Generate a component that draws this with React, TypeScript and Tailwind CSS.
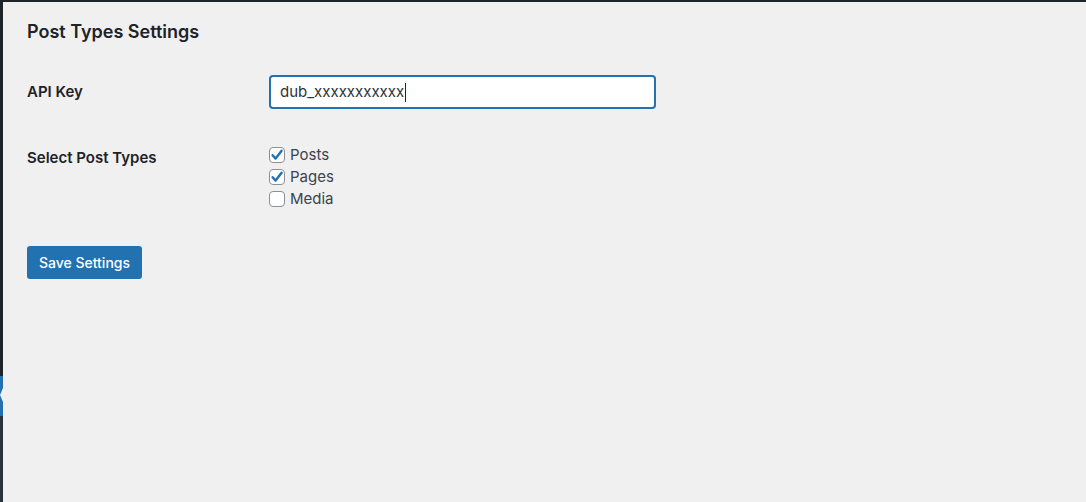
import React from 'react';

const font = { fontFamily: 'Inter, "Noto Sans", sans-serif' };

interface BoxProps {
  label: string;
  checked: boolean;
}

const CheckRow: React.FC<BoxProps> = ({ label, checked }) => (
  <label className="flex items-center h-[22px] gap-[5px]">
    <span className="w-4 h-4 rounded-[4px] border border-[#8c8f94] bg-white flex items-center justify-center">
      {checked && (
        <svg width="14" height="14" viewBox="0 0 14 14">
          <path d="M2.6 7.2 L5.6 10.6 L11.6 2.8" fill="none" stroke="#2271b1" strokeWidth="2.4" strokeLinecap="round" strokeLinejoin="round" />
        </svg>
      )}
    </span>
    <span className="text-[15px] text-[#3c434a] pt-px">{label}</span>
  </label>
);

const App: React.FC = () => {
  return (
    <div className="w-[1086px] h-[502px] flex flex-col bg-[#f0f0f1] overflow-hidden" style={font}>
      <div className="h-[2px] bg-[#1d2327]" />
      <div className="flex flex-1">
        <div className="w-[3px] flex flex-col">
          <div className="h-[374px] bg-[#1d2327]" />
          <div className="h-[40px] bg-[#2271b1] relative">
            <svg className="absolute top-[12px] right-0" width="3" height="14" viewBox="0 0 3 14">
              <path d="M3 0 L0 7 L3 14 Z" fill="#f0f0f1" />
            </svg>
          </div>
          <div className="flex-1 bg-[#2c3338]" />
        </div>

        <div className="flex-1 pl-[24px] text-[#1d2327]">
          <h2 className="mt-[19px] text-[18px] leading-[22px] font-semibold">Post Types Settings</h2>

          <div className="flex items-center mt-[32px]">
            <div className="w-[242px] text-[15px] font-semibold pt-px">API Key</div>
            <div className="w-[387px] h-[34px] rounded-[4px] border-2 border-[#2271b1] bg-white flex items-center pl-[9px] text-[15px] text-[#2c3338]">
              dub_xxxxxxxxxxx
              <span className="w-px h-[19px] bg-[#1d2327] ml-px" />
            </div>
          </div>

          <div className="flex items-start mt-[35px]">
            <div className="w-[242px] text-[15px] font-semibold pt-[3px] leading-[22px]">Select Post Types</div>
            <div className="flex flex-col">
              <CheckRow label="Posts" checked />
              <CheckRow label="Pages" checked />
              <CheckRow label="Media" checked={false} />
            </div>
          </div>

          <button className="mt-[36px] w-[115px] h-[33px] rounded-[3px] bg-[#2271b1] text-white text-[14px] font-medium">
            Save Settings
          </button>
        </div>
      </div>
    </div>
  );
};

export default App;
